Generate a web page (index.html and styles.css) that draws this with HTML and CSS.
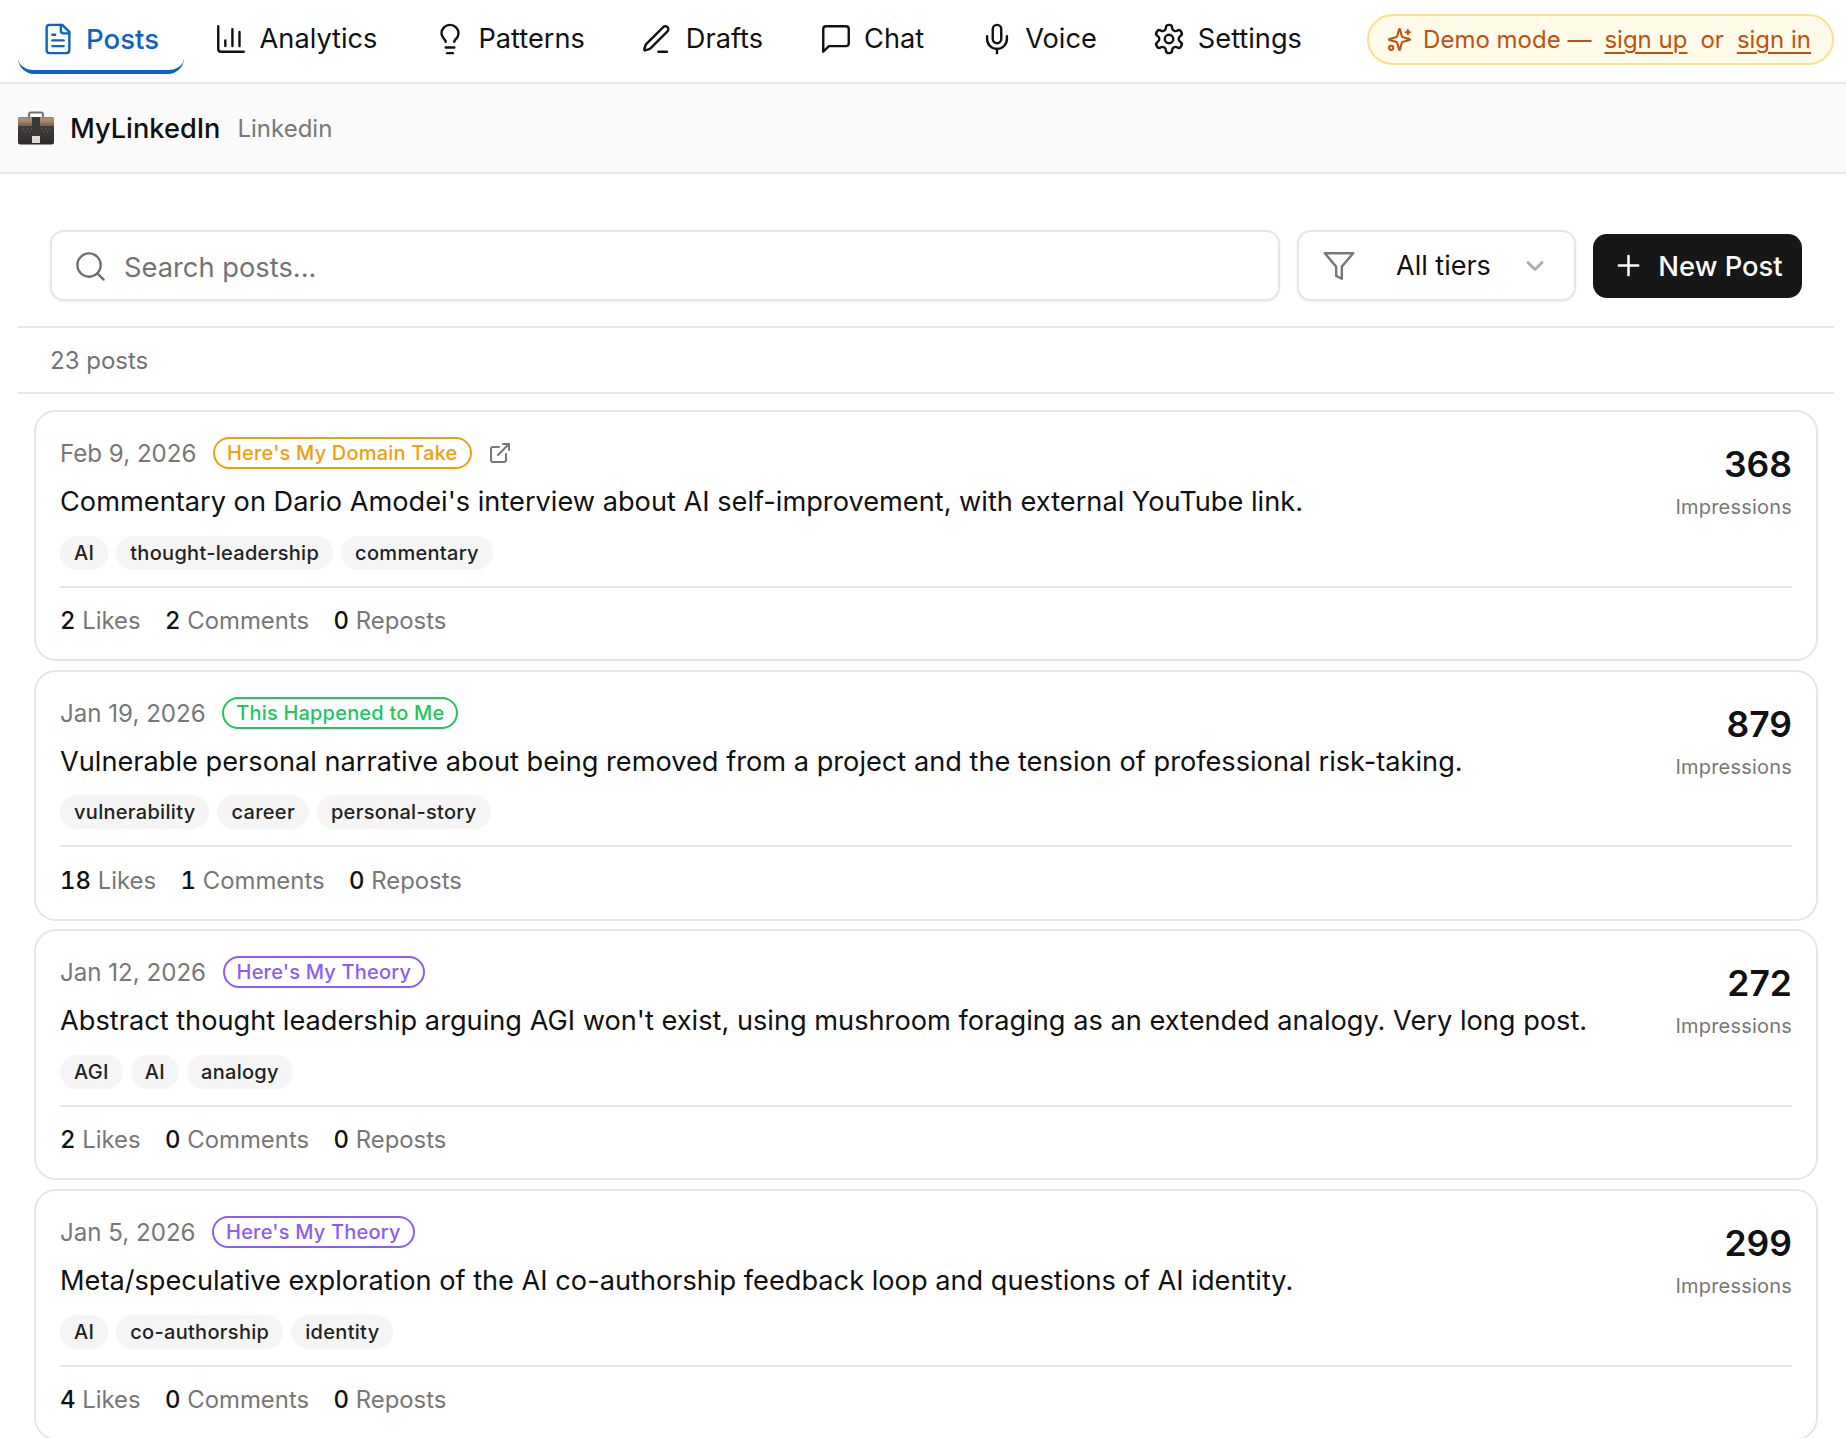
FILE: index.html
```html
<!DOCTYPE html>
<html lang="en">
<head>
<meta charset="utf-8">
<title>Posts</title>
<link rel="stylesheet" href="styles.css">
</head>
<body>
<nav class="nav">
  <a class="tab tab-active"><svg class="ico" viewBox="0 0 24 24"><path d="M15 2H6a2 2 0 0 0-2 2v16a2 2 0 0 0 2 2h12a2 2 0 0 0 2-2V7Z"/><path d="M14 2v4a2 2 0 0 0 2 2h4"/><path d="M10 9H8"/><path d="M16 13H8"/><path d="M16 17H8"/></svg>Posts</a>
  <a class="tab"><svg class="ico" viewBox="0 0 24 24"><path d="M3 3v16a2 2 0 0 0 2 2h16"/><path d="M18 17V7"/><path d="M13 17V5"/><path d="M8 17v-4"/></svg>Analytics</a>
  <a class="tab"><svg class="ico" viewBox="0 0 24 24"><path d="M15 14c.2-1 .7-1.7 1.5-2.5 1-.9 1.5-2.2 1.5-3.5A6 6 0 0 0 6 8c0 1 .2 2.2 1.5 3.5.7.7 1.3 1.5 1.5 2.5"/><path d="M9 18h6"/><path d="M10 22h4"/></svg>Patterns</a>
  <a class="tab"><svg class="ico" viewBox="0 0 24 24"><path d="M13 21h6"/><path d="M16.376 3.622a1 1 0 0 1 3.002 3.002L7.368 18.635a2 2 0 0 1-.855.506l-2.872.838a.5.5 0 0 1-.62-.62l.838-2.872a2 2 0 0 1 .506-.854z"/></svg>Drafts</a>
  <a class="tab"><svg class="ico" viewBox="0 0 24 24"><path d="M21 15a2 2 0 0 1-2 2H7l-4 4V5a2 2 0 0 1 2-2h14a2 2 0 0 1 2 2z"/></svg>Chat</a>
  <a class="tab"><svg class="ico" viewBox="0 0 24 24"><path d="M12 2a3 3 0 0 0-3 3v7a3 3 0 0 0 6 0V5a3 3 0 0 0-3-3Z"/><path d="M19 10v2a7 7 0 0 1-14 0v-2"/><path d="M12 19v3"/></svg>Voice</a>
  <a class="tab"><svg class="ico" viewBox="0 0 24 24"><path d="M12.22 2h-.44a2 2 0 0 0-2 2v.18a2 2 0 0 1-1 1.73l-.43.25a2 2 0 0 1-2 0l-.15-.08a2 2 0 0 0-2.73.73l-.22.38a2 2 0 0 0 .73 2.73l.15.1a2 2 0 0 1 1 1.72v.51a2 2 0 0 1-1 1.74l-.15.09a2 2 0 0 0-.73 2.73l.22.38a2 2 0 0 0 2.73.73l.15-.08a2 2 0 0 1 2 0l.43.25a2 2 0 0 1 1 1.73V20a2 2 0 0 0 2 2h.44a2 2 0 0 0 2-2v-.18a2 2 0 0 1 1-1.73l.43-.25a2 2 0 0 1 2 0l.15.08a2 2 0 0 0 2.73-.73l.22-.39a2 2 0 0 0-.73-2.73l-.15-.08a2 2 0 0 1-1-1.74v-.5a2 2 0 0 1 1-1.74l.15-.09a2 2 0 0 0 .73-2.73l-.22-.38a2 2 0 0 0-2.73-.73l-.15.08a2 2 0 0 1-2 0l-.43-.25a2 2 0 0 1-1-1.73V4a2 2 0 0 0-2-2z"/><circle cx="12" cy="12" r="3"/></svg>Settings</a>
  <div class="demo">
    <svg class="ico-demo" viewBox="0 0 24 24"><path d="M9.937 15.5A2 2 0 0 0 8.5 14.063l-6.135-1.582a.5.5 0 0 1 0-.962L8.5 9.936A2 2 0 0 0 9.937 8.5l1.582-6.135a.5.5 0 0 1 .963 0L14.063 8.5A2 2 0 0 0 15.5 9.937l6.135 1.581a.5.5 0 0 1 0 .964L15.5 14.063a2 2 0 0 0-1.437 1.437l-1.582 6.135a.5.5 0 0 1-.963 0z"/><path d="M20 3v4"/><path d="M22 5h-4"/><circle cx="4" cy="20" r="2"/></svg>
    <span>Demo mode —</span><a class="demo-link">sign up</a><span>or</span><a class="demo-link">sign in</a>
  </div>
</nav>

<header class="sub">
  <svg class="case" viewBox="0 0 36 34">
    <defs>
      <linearGradient id="caseTop" x1="0" y1="0" x2="0" y2="1"><stop offset="0" stop-color="#8d8a86"/><stop offset=".35" stop-color="#b08e6e"/><stop offset="1" stop-color="#7a5f48"/></linearGradient>
      <linearGradient id="caseBody" x1="0" y1="0" x2="0" y2="1"><stop offset="0" stop-color="#4a4744"/><stop offset="1" stop-color="#2e2c2b"/></linearGradient>
    </defs>
    <path class="case-handle" d="M11 7V3.500A2 2 0 0 1 13 1.500h10A2 2 0 0 1 25 3.500V7"/>
    <rect class="case-body" x="0" y="6" width="36" height="27.500" rx="2.500"/>
    <path class="case-top" d="M0 8.500A2.500 2.500 0 0 1 2.500 6h31A2.500 2.500 0 0 1 36 8.500V15H0z"/>
    <path class="case-dots" d="M5 18h1M9 18h1M13 18h1M23 18h1M27 18h1M31 18h1M7 21h1M11 21h1M25 21h1M29 21h1"/>
    <rect class="case-strap" x="14" y="6" width="8" height="17"/>
    <rect class="case-latch" x="14" y="25" width="8" height="7"/>
  </svg>
  <span class="sub-name">MyLinkedIn</span>
  <span class="sub-kind">Linkedin</span>
</header>

<section class="toolbar">
  <div class="search">
    <svg class="ico-search" viewBox="0 0 24 24"><circle cx="11" cy="11" r="8"/><path d="m21 21-4.300-4.300"/></svg>
    <span class="search-ph">Search posts...</span>
  </div>
  <div class="tiers">
    <svg class="ico-filter" viewBox="0 0 24 24"><path d="M22 3H2l8 9.460V19l4 2v-8.540L22 3z"/></svg>
    <span class="tiers-label">All tiers</span>
    <svg class="ico-chev" viewBox="0 0 24 24"><path d="m6 9 6 6 6-6"/></svg>
  </div>
  <button class="new-post"><svg class="ico-plus" viewBox="0 0 24 24"><path d="M5 12h14"/><path d="M12 5v14"/></svg>New Post</button>
</section>

<div class="count">23 posts</div>

<main class="list">
  <article class="card">
    <div class="card-top">
      <div class="card-main">
        <div class="meta"><span class="date">Feb 9, 2026</span><span class="badge badge-amber">Here's My Domain Take</span><svg class="ico-ext" viewBox="0 0 24 24"><path d="M15 3h6v6"/><path d="M10 14 21 3"/><path d="M18 13v6a2 2 0 0 1-2 2H5a2 2 0 0 1-2-2V8a2 2 0 0 1 2-2h6"/></svg></div>
        <p class="title">Commentary on Dario Amodei's interview about AI self-improvement, with external YouTube link.</p>
        <div class="tags"><span class="tag">AI</span><span class="tag">thought-leadership</span><span class="tag">commentary</span></div>
      </div>
      <div class="score"><div class="score-num">368</div><div class="score-label">Impressions</div></div>
    </div>
    <div class="stats"><span><b>2</b> Likes</span><span><b>2</b> Comments</span><span><b>0</b> Reposts</span></div>
  </article>
  <article class="card">
    <div class="card-top">
      <div class="card-main">
        <div class="meta"><span class="date">Jan 19, 2026</span><span class="badge badge-green">This Happened to Me</span></div>
        <p class="title">Vulnerable personal narrative about being removed from a project and the tension of professional risk-taking.</p>
        <div class="tags"><span class="tag">vulnerability</span><span class="tag">career</span><span class="tag">personal-story</span></div>
      </div>
      <div class="score"><div class="score-num">879</div><div class="score-label">Impressions</div></div>
    </div>
    <div class="stats"><span><b>18</b> Likes</span><span><b>1</b> Comments</span><span><b>0</b> Reposts</span></div>
  </article>
  <article class="card">
    <div class="card-top">
      <div class="card-main">
        <div class="meta"><span class="date">Jan 12, 2026</span><span class="badge badge-violet">Here's My Theory</span></div>
        <p class="title">Abstract thought leadership arguing AGI won't exist, using mushroom foraging as an extended analogy. Very long post.</p>
        <div class="tags"><span class="tag">AGI</span><span class="tag">AI</span><span class="tag">analogy</span></div>
      </div>
      <div class="score"><div class="score-num">272</div><div class="score-label">Impressions</div></div>
    </div>
    <div class="stats"><span><b>2</b> Likes</span><span><b>0</b> Comments</span><span><b>0</b> Reposts</span></div>
  </article>
  <article class="card">
    <div class="card-top">
      <div class="card-main">
        <div class="meta"><span class="date">Jan 5, 2026</span><span class="badge badge-violet">Here's My Theory</span></div>
        <p class="title">Meta/speculative exploration of the AI co-authorship feedback loop and questions of AI identity.</p>
        <div class="tags"><span class="tag">AI</span><span class="tag">co-authorship</span><span class="tag">identity</span></div>
      </div>
      <div class="score"><div class="score-num">299</div><div class="score-label">Impressions</div></div>
    </div>
    <div class="stats"><span><b>4</b> Likes</span><span><b>0</b> Comments</span><span><b>0</b> Reposts</span></div>
  </article>
</main>
</body>
</html>
```

FILE: styles.css
```css
* { box-sizing: border-box; }
html, body { margin: 0; height: 100%; overflow: hidden; }
body { background: #fff; color: #111; font-family: Inter, "Liberation Sans", sans-serif; }
svg { fill: none; stroke: currentColor; stroke-linecap: round; stroke-linejoin: round; flex: none; }

.nav { height: 84px; display: flex; align-items: flex-start; padding: 0 12px 0 18px; border-bottom: 2px solid #e5e5e5; }
.tab { height: 74px; padding: 7px 21.5px 0 23px; margin-right: 11px; display: flex; align-items: center; gap: 11.5px; font-size: 27.2px; color: #111; border-radius: 0 0 16px 16px; border-bottom: 4px solid transparent; }
.tab .ico { width: 34px; height: 34px; stroke-width: 1.7; }
.tab-active { padding: 7px 24.5px 0 23px; margin-right: 7.5px; gap: 11px; font-size: 27.6px; color: #0a66c2; font-weight: 500; border-bottom-color: #0a66c2; }
.demo { margin: 14px 0 0 auto; height: 51px; display: flex; align-items: center; gap: 11px; padding: 0 19px 0 18px; border: 2px solid #fde08a; border-radius: 26px; background: #fffbeb; color: #c2510a; font-size: 24px; white-space: nowrap; }
.ico-demo { width: 25px; height: 25px; stroke-width: 2; }
.demo-link { margin: 0 2px; text-decoration: underline; text-decoration-thickness: 2px; text-underline-offset: 4px; }

.sub { height: 90px; display: flex; align-items: center; padding: 0 18px; background: #fafafa; border-bottom: 2px solid #e5e5e5; }
.case { width: 36px; height: 34px; stroke: none; margin-right: 16px; }
.case-handle { stroke: #77736e; stroke-width: 2; }
.case-body { fill: url(#caseBody); stroke: none; }
.case-top { fill: url(#caseTop); stroke: none; }
.case-dots { stroke: #c9601f; stroke-width: 1.2; stroke-linecap: butt; }
.case-strap { fill: #3a3836; stroke: none; }
.case-latch { fill: #dedcd9; stroke: none; }
.sub-name { font-size: 27.2px; font-weight: 500; margin-right: 17px; }
.sub-kind { font-size: 24px; color: #777; }

.toolbar { margin: 56px 12px 0 18px; padding: 0 32px 25px; display: flex; align-items: center; gap: 17px; border-bottom: 2px solid #e5e5e5; }
.search { flex: 1; height: 71px; display: flex; align-items: center; gap: 16px; padding: 0 21px; border: 2px solid #e5e5e5; border-radius: 14px; background: #fff; box-shadow: 0 1px 3px rgba(0,0,0,.08); }
.ico-search { width: 35px; height: 35px; margin-top: 2px; stroke-width: 1.6; color: #6f6f6f; }
.search-ph { padding-top: 4px; font-size: 27.3px; color: #737373; }
.tiers { width: 279px; height: 71px; display: flex; align-items: center; padding: 0 25px 0 23px; border: 2px solid #e5e5e5; border-radius: 14px; background: #fff; box-shadow: 0 1px 3px rgba(0,0,0,.08); }
.ico-filter { width: 34px; height: 34px; stroke-width: 1.7; color: #777; }
.tiers-label { flex: 1; padding-left: 40px; font-size: 27px; color: #111; }
.ico-chev { width: 28px; height: 28px; stroke-width: 2.3; color: #aaa; }
.new-post { width: 209px; height: 64px; display: flex; align-items: center; justify-content: center; gap: 13px; border: 0; border-radius: 14px; background: #171717; color: #fff; font: 500 27.4px Inter, "Liberation Sans", sans-serif; }
.ico-plus { width: 33px; height: 33px; stroke-width: 1.8; }

.count { margin: 0 12px 0 18px; padding: 0 32px; height: 66px; display: flex; align-items: center; font-size: 24px; color: #737373; border-bottom: 2px solid #e5e5e5; }

.list { margin: 16px 28px 0 34px; display: flex; flex-direction: column; gap: 8.7px; }
.card { padding: 24px 24px 0; height: 251px; border: 2px solid #e5e5e5; border-radius: 22px; background: #fff; }
.card-top { display: flex; justify-content: space-between; height: 151.5px; border-bottom: 2px solid #e5e5e5; }
.meta { display: flex; align-items: center; gap: 16.5px; height: 34px; }
.date { padding-top: 1px; font-size: 24.1px; color: #777; }
.badge { height: 32px; padding: 0 12px; display: flex; align-items: center; font-size: 20px; font-weight: 500; letter-spacing: .2px; border: 2px solid currentColor; border-radius: 16px; }
.badge-amber { color: #f59e0b; }
.badge-green { color: #22c55e; }
.badge-violet { color: #8b5cf6; }
.ico-ext { width: 24px; height: 24px; stroke-width: 2; color: #777; }
.title { margin: 14px 0 0; font-size: 27.2px; line-height: 36px; color: #111; }
.tags { margin-top: 15.5px; display: flex; gap: 8px; }
.tag { height: 34px; padding: 0 14px; display: flex; align-items: center; font-size: 20px; font-weight: 500; letter-spacing: .3px; color: #222; background: #f5f5f5; border-radius: 17px; }
.score { text-align: right; padding-top: 7px; }
.score-num { font-size: 35.5px; font-weight: 600; line-height: 44px; color: #111; }
.score-label { margin-top: 8px; font-size: 20px; letter-spacing: .2px; color: #777; }
.stats { height: 66px; display: flex; align-items: center; gap: 24.4px; font-size: 23.9px; color: #777; }
.stats b { font-weight: 500; color: #111; font-variant-numeric: tabular-nums; }
```
